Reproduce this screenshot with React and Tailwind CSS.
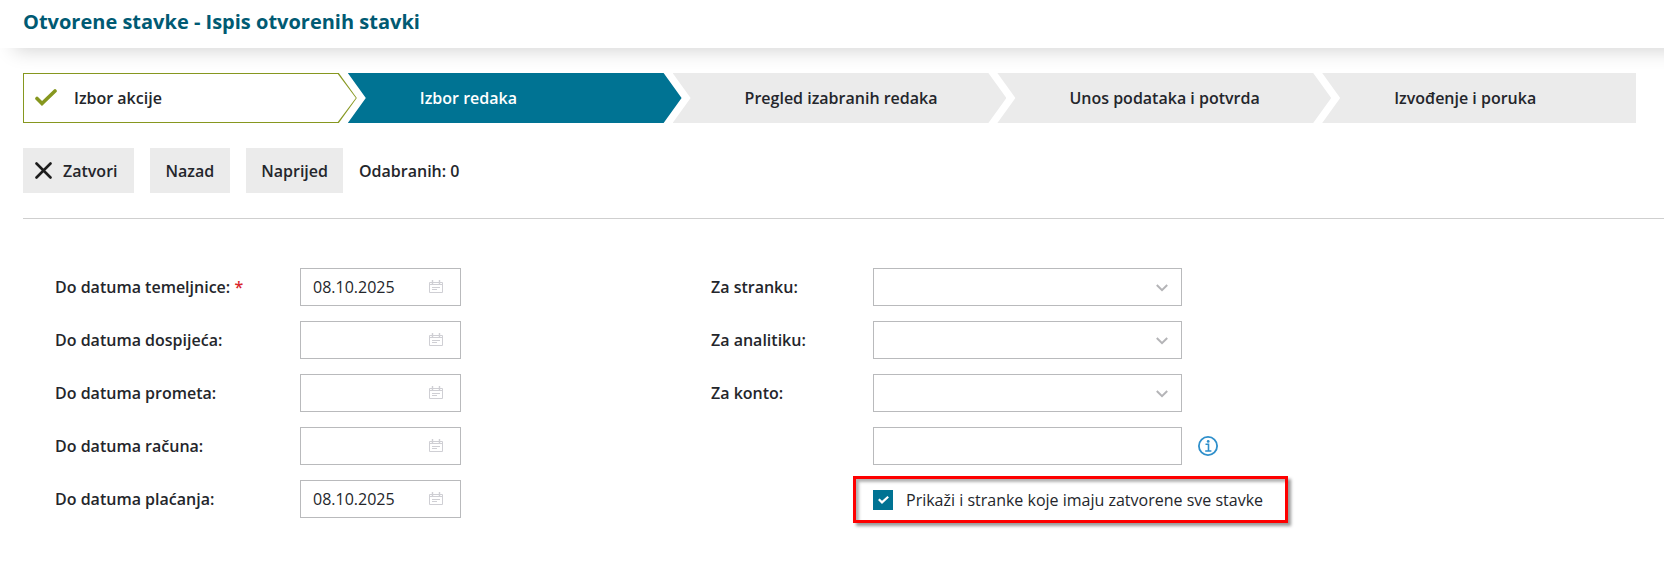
import React, { useState } from "react";

const steps = [
  "Izbor redaka",
  "Pregled izabranih redaka",
  "Unos podataka i potvrda",
  "Izvođenje i poruka",
];

const dateFields = [
  { name: "temeljnica", label: "Do datuma temeljnice:", required: true },
  { name: "dospijece", label: "Do datuma dospijeća:" },
  { name: "promet", label: "Do datuma prometa:" },
  { name: "racun", label: "Do datuma računa:" },
  { name: "placanje", label: "Do datuma plaćanja:" },
];

const selectFields = [
  { name: "stranka", label: "Za stranku:" },
  { name: "analitika", label: "Za analitiku:" },
  { name: "konto", label: "Za konto:" },
];

const CalendarIcon = () => (
  <svg width="14" height="14" viewBox="0 0 14 14" fill="none" stroke="#cfcfd4">
    <path d="M0.5 2.5h13v10h-13z" />
    <path d="M0.5 4.5h13M3 7.5h8M3 9.5h5" />
    <path d="M3.5 0v4M10.5 0v4" strokeWidth="1.4" />
  </svg>
);

const InfoIcon = () => (
  <svg width="20" height="20" viewBox="0 0 20 20" fill="none" stroke="#2e8fcb">
    <circle cx="10" cy="10" r="9.1" strokeWidth="1.8" />
    <path d="M7.5 8.3h3v6.4M7.2 15h6.2" strokeWidth="1.6" />
    <circle cx="10.2" cy="5.4" r="1.4" fill="#2e8fcb" stroke="none" />
  </svg>
);

const Steps = () => (
  <ol className="flex h-[50px] overflow-hidden font-semibold">
    {/* Finished step */}
    <li className="flex-1 bg-[#86971f] [clip-path:polygon(0_0,calc(100%-18px)_0,100%_50%,calc(100%-18px)_100%,0_100%)]">
      <div className="h-full p-px">
        <div className="flex h-full items-center bg-white pl-[11px] [clip-path:polygon(0_0,calc(100%-18px)_0,100%_50%,calc(100%-18px)_100%,0_100%)]">
          <svg width="22" height="18" viewBox="0 0 22 18" fill="none" stroke="#86971f" strokeWidth="3.6" strokeLinecap="round">
            <path d="M2 9.5l5 5L20 2" />
          </svg>
          <span className="ml-[17px]">Izbor akcije</span>
        </div>
      </div>
    </li>
    {steps.map((step, i) => (
      <li
        key={step}
        aria-current={i === 0 ? "step" : undefined}
        className={`-ml-[9px] flex flex-1 items-center last:-mr-5 [clip-path:polygon(0_0,calc(100%-18px)_0,100%_50%,calc(100%-18px)_100%,0_100%,18px_50%)] ${
          i === 0 ? "bg-[#007393] text-white" : "bg-[#ebebeb]"
        }`}
      >
        <span className="pl-[72px]">{step}</span>
      </li>
    ))}
  </ol>
);

const App = () => {
  const [data, setData] = useState({
    temeljnica: "08.10.2025",
    dospijece: "",
    promet: "",
    racun: "",
    placanje: "08.10.2025",
    stranka: "",
    analitika: "",
    konto: "",
    opis: "",
  });
  const [showClosed, setShowClosed] = useState(true);

  const handleOnChange = (e) => {
    const { name, value } = e.target;
    setData((prev) => ({ ...prev, [name]: value }));
  };

  return (
    <div className="min-h-screen overflow-x-hidden bg-white font-['Open_Sans',sans-serif] text-base text-[#24262b]">
      <header className="-mr-8 h-12 bg-white pt-2 pl-[23px] shadow-[6px_10px_20px_-8px_rgba(0,0,0,0.18)]">
        <h1 className="text-xl leading-7 font-bold text-[#005a73]">
          Otvorene stavke - Ispis otvorenih stavki
        </h1>
      </header>

      <div className="pt-[25px] pr-7 pl-[23px]">
        <Steps />
      </div>

      {/* Actions */}
      <div className="ml-[23px] flex items-center gap-4 border-b border-[#cfcfcf] pt-[25px] pb-[25px] font-semibold">
        <button type="button" className="flex h-[45px] items-center gap-[11px] bg-[#ebebeb] pr-4 pl-3">
          <svg width="17" height="17" viewBox="0 0 17 17" fill="none" stroke="#1d1d1d" strokeWidth="2.6" strokeLinecap="round">
            <path d="M1.5 1.5l14 14M15.5 1.5l-14 14" />
          </svg>
          Zatvori
        </button>
        <button type="button" className="h-[45px] bg-[#ebebeb] px-4">
          Nazad
        </button>
        <button type="button" className="h-[45px] bg-[#ebebeb] px-[15px]">
          Naprijed
        </button>
        <span>Odabranih: 0</span>
      </div>

      <form className="grid grid-cols-[41fr_59fr] pt-[49px] pr-[9px] pl-[55px]">
        {/* Dates */}
        <div className="flex flex-col gap-[15px]">
          {dateFields.map((field) => (
            <div key={field.name} className="flex items-center">
              <label htmlFor={field.name} className="w-[245px] font-semibold">
                {field.label}
                {field.required && <span className="text-[#d9262c]"> *</span>}
              </label>
              <div className="relative w-[161px]">
                <input
                  id={field.name}
                  name={field.name}
                  type="text"
                  value={data[field.name]}
                  onChange={handleOnChange}
                  className="block h-[38px] w-full border border-[#b9babc] bg-white pr-10 pl-3 focus:outline-none"
                />
                <button
                  type="button"
                  aria-label="Kalendar"
                  className="absolute top-3 right-[18px]"
                >
                  <CalendarIcon />
                </button>
              </div>
            </div>
          ))}
        </div>

        {/* Filters */}
        <div className="flex flex-col gap-[15px]">
          {selectFields.map((field) => (
            <div key={field.name} className="flex items-center">
              <label htmlFor={field.name} className="w-[162px] font-semibold">
                {field.label}
              </label>
              <div className="relative w-[309px]">
                <select
                  id={field.name}
                  name={field.name}
                  value={data[field.name]}
                  onChange={handleOnChange}
                  className="block h-[38px] w-full appearance-none border border-[#b9babc] bg-white px-3 focus:outline-none"
                >
                  <option value=""></option>
                </select>
                <svg
                  className="pointer-events-none absolute top-4 right-3.5"
                  width="12"
                  height="8"
                  viewBox="0 0 12 8"
                  fill="none"
                  stroke="#b4b4b7"
                  strokeWidth="2"
                >
                  <path d="M0.8 1l5.2 5.2L11.2 1" />
                </svg>
              </div>
            </div>
          ))}

          <div className="flex items-center pl-[162px]">
            <input
              name="opis"
              type="text"
              aria-label="Konta"
              value={data.opis}
              onChange={handleOnChange}
              className="h-[38px] w-[309px] border border-[#b9babc] bg-white px-3 focus:outline-none"
            />
            <button type="button" aria-label="Informacije" className="ml-4">
              <InfoIcon />
            </button>
          </div>

          <div className="-mt-1 ml-[142px] flex h-[47px] w-fit items-center border-3 border-[#fe0000] pr-[22px] pl-[17px] shadow-[3px_3px_3px_rgba(0,0,0,0.4),inset_3px_3px_3px_rgba(0,0,0,0.3)]">
            <label className="flex items-center gap-[13px]">
              <span className="relative size-5">
                <input
                  type="checkbox"
                  checked={showClosed}
                  onChange={(e) => setShowClosed(e.target.checked)}
                  className="block size-5 appearance-none border border-[#b9babc] bg-white checked:border-[#007393] checked:bg-[#007393]"
                />
                {showClosed && (
                  <svg
                    className="pointer-events-none absolute top-1.5 left-[5px]"
                    width="11"
                    height="8"
                    viewBox="0 0 11 8"
                    fill="none"
                    stroke="#fff"
                    strokeWidth="2.2"
                  >
                    <path d="M0.8 3.2l3.2 3.2L10.2 0.8" />
                  </svg>
                )}
              </span>
              Prikaži i stranke koje imaju zatvorene sve stavke
            </label>
          </div>
        </div>
      </form>
    </div>
  );
};

export default App;
